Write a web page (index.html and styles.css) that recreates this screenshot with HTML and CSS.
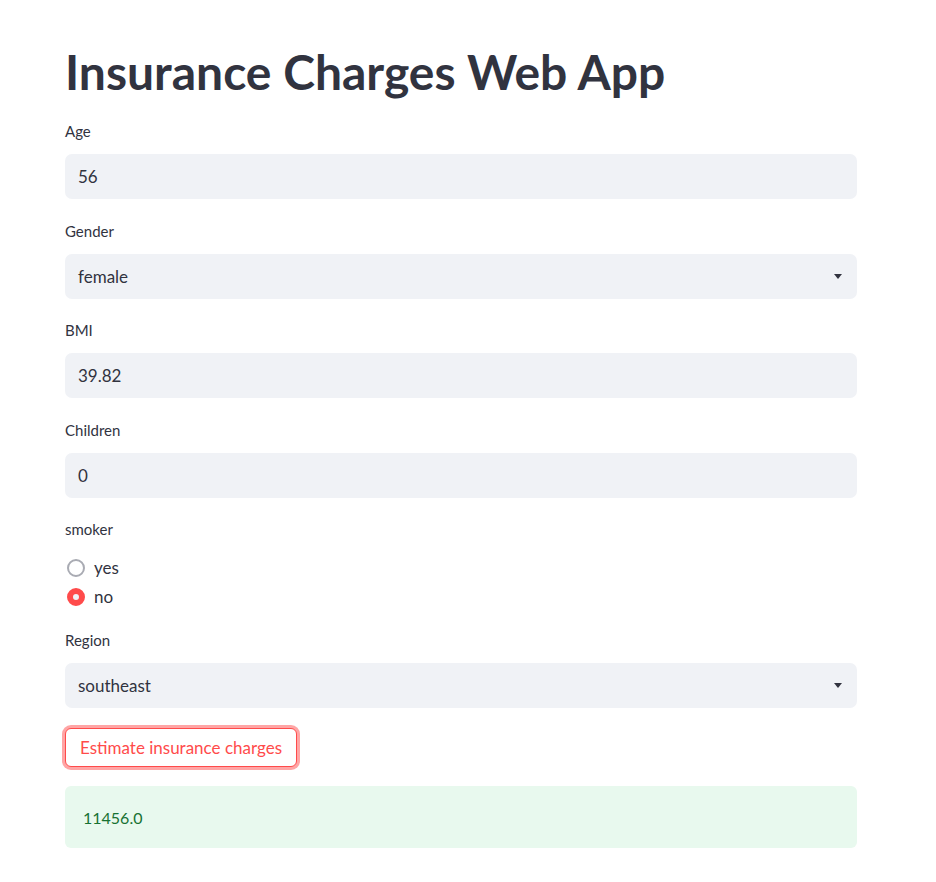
FILE: index.html
```html
<!DOCTYPE html>
<html lang="en">
<head>
<meta charset="utf-8">
<title>Insurance Charges Web App</title>
<link rel="stylesheet" href="styles.css">
</head>
<body>
<main class="app">
  <h1 class="title">Insurance Charges Web App</h1>
  <div class="widgets">
    <div class="widget">
      <label class="label">Age</label>
      <div class="field"><span class="value">56</span></div>
    </div>
    <div class="widget">
      <label class="label">Gender</label>
      <div class="field select"><span class="value">female</span><span class="caret"></span></div>
    </div>
    <div class="widget">
      <label class="label">BMI</label>
      <div class="field"><span class="value">39.82</span></div>
    </div>
    <div class="widget">
      <label class="label">Children</label>
      <div class="field"><span class="value">0</span></div>
    </div>
    <div class="widget">
      <label class="label">smoker</label>
      <div class="radios">
        <div class="radio"><span class="dot"></span><span class="opt">yes</span></div>
        <div class="radio checked"><span class="dot"></span><span class="opt">no</span></div>
      </div>
    </div>
    <div class="widget">
      <label class="label">Region</label>
      <div class="field select"><span class="value">southeast</span><span class="caret"></span></div>
    </div>
    <div class="btn-row"><button class="btn">Estimate insurance charges</button></div>
    <div class="success">11456.0</div>
  </div>
</main>
</body>
</html>
```
FILE: styles.css
```css
* { box-sizing: border-box; }
html, body { margin: 0; padding: 0; background: #ffffff; }
body {
  font-family: "Lato", "Liberation Sans", sans-serif;
  color: #31333f;
}
.app {
  width: 792px;
  margin-left: 65px;
  padding-top: 40px;
}
.title {
  margin: 0;
  font-size: 48px;
  line-height: 64px;
  font-weight: 700;
  color: #31333f;
  height: 79px;
}
.widgets {
  display: flex;
  flex-direction: column;
  gap: 19.5px;
}
.widget { display: flex; flex-direction: column; }
.label {
  display: block;
  font-size: 15px;
  line-height: 24px;
  height: 24px;
  margin-bottom: 11px;
}
.field {
  height: 45px;
  background: #f0f2f6;
  border-radius: 7px;
  display: flex;
  align-items: center;
  padding: 0 13px;
  font-size: 17px;
}
.select { justify-content: space-between; padding-right: 15px; }
.caret {
  width: 0; height: 0;
  border-left: 4px solid transparent;
  border-right: 4px solid transparent;
  border-top: 5px solid #31333f;
}
.radios {
  display: flex;
  flex-direction: column;
  gap: 5px;
  margin-top: 3.5px;
}
.radio {
  display: flex;
  align-items: center;
  height: 24px;
  font-size: 17px;
}
.dot {
  width: 18px; height: 18px;
  border-radius: 50%;
  border: 2px solid #a9abb3;
  margin-left: 2px;
  margin-right: 9px;
  background: #fff;
}
.radio.checked .dot {
  border: 6px solid #ff4b4b;
  background: #f0f2f6;
}
.btn-row { display: flex; }
.btn {
  font-family: inherit;
  font-size: 17px;
  color: #ff4b4b;
  background: #fff;
  border: 1px solid #ff4b4b;
  border-radius: 6px;
  height: 39px;
  padding: 0 14px;
  box-shadow: 0 0 0 3px rgba(255, 75, 75, 0.5);
}
.success {
  height: 62px;
  background: #e8f9ee;
  color: #177233;
  border-radius: 6px;
  display: flex;
  align-items: center;
  padding: 0 18px;
  font-size: 16px;
}
```
